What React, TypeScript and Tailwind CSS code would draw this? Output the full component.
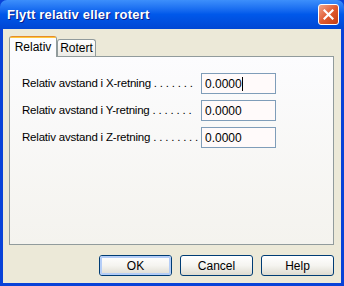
import React from 'react';

const rows = [
  { label: 'Relativ avstand i X-retning . . . . . . .', value: '0.0000', focused: true },
  { label: 'Relativ avstand i Y-retning . . . . . . .', value: '0.0000', focused: false },
  { label: 'Relativ avstand i Z-retning . . . . . . . .', value: '0.0000', focused: false },
];

const font = { fontFamily: '"Liberation Sans", Arial, sans-serif' };

const XpButton = ({ label, isDefault }: { label: string; isDefault?: boolean }) => (
  <button
    className="w-[73px] h-[21px] rounded-[3px] border border-[#003c74] bg-gradient-to-b from-[#ffffff] via-[#f5f4f0] to-[#dedbd0] p-0"
  >
    <div
      className={
        'w-full h-full rounded-[2px] flex items-center justify-center text-[12px] text-black ' +
        (isDefault ? 'border-2 border-[#b4cdf7]' : 'border border-transparent')
      }
    >
      {label}
    </div>
  </button>
);

const App = () => {
  return (
    <div className="w-[344px] h-[286px] flex flex-col bg-[#0842d8]" style={font}>
      {/* title bar */}
      <div className="h-[29px] shrink-0 flex items-center justify-between pl-[7px] pr-[5px] rounded-t-[7px] bg-gradient-to-b from-[#3d8ffb] via-[#0058ea] to-[#0046d4]">
        <span className="text-white font-bold text-[13px] tracking-[0.2px] [text-shadow:1px_1px_0_#0a1e8c]">
          Flytt relativ eller rotert
        </span>
        <div className="w-[21px] h-[21px] rounded-[3px] border border-white bg-gradient-to-br from-[#f0a58a] via-[#e05a2f] to-[#c43d10] flex items-center justify-center">
          <svg width="11" height="11" viewBox="0 0 11 11">
            <path d="M1.5 1.5 L9.5 9.5 M9.5 1.5 L1.5 9.5" stroke="white" strokeWidth="2.2" strokeLinecap="square" />
          </svg>
        </div>
      </div>

      {/* body */}
      <div className="flex-1 mx-[3px] mb-[4px] bg-[#ece9d8] flex flex-col pt-[7px] pl-[6px] pr-[7px] pb-[7px]">
        {/* tabs */}
        <div className="flex items-end h-[20px] relative z-10">
          <div className="w-[48px] h-[21px] -mb-[1px] rounded-t-[3px] border-x border-[#919b9c] bg-[#fcfcfe] flex flex-col">
            <div className="h-[3px] rounded-t-[3px] bg-[#ffc83c] border-t border-[#e68b2c]" />
            <div className="flex-1 flex items-center justify-center text-[12px] text-black pb-[1px]">Relativ</div>
          </div>
          <div className="w-[39px] h-[17px] rounded-t-[3px] border border-b-0 border-[#919b9c] bg-gradient-to-b from-[#ffffff] to-[#ecebe6] flex items-center justify-center text-[12px] text-black">
            Rotert
          </div>
        </div>

        {/* panel */}
        <div className="h-[189px] border border-[#919b9c] bg-gradient-to-b from-[#fcfcfe] to-[#f4f3ee] pt-[16px] pl-[12px] flex flex-col gap-[6px]">
          {rows.map((r) => (
            <div key={r.label} className="flex items-center h-[21px]">
              <div className="w-[179px] text-[11.5px] tracking-[-0.2px] text-black whitespace-nowrap overflow-hidden">{r.label}</div>
              <div className="w-[75px] h-[21px] border border-[#7f9db9] bg-[#fffafa] flex items-center pl-[3px] text-[12px] text-black">
                {r.value}
                {r.focused && <span className="w-[1px] h-[14px] bg-black" />}
              </div>
            </div>
          ))}
        </div>

        {/* buttons */}
        <div className="mt-[10px] flex justify-end gap-[8px]">
          <XpButton label="OK" isDefault />
          <XpButton label="Cancel" />
          <XpButton label="Help" />
        </div>
      </div>
    </div>
  );
};

export default App;
